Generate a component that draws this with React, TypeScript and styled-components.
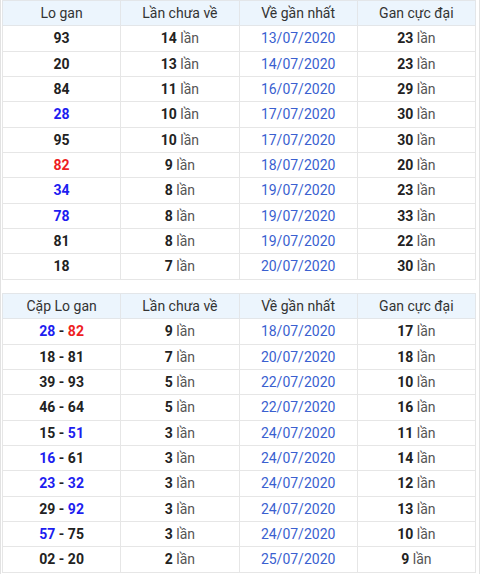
import React from "react";
import styled, { createGlobalStyle } from "styled-components";

const Global = createGlobalStyle`
  html, body { margin: 0; padding: 0; background: #fff; }
  body { font-family: Roboto, "Noto Sans", "Liberation Sans", sans-serif; }
`;

const Page = styled.div`
  width: 480px;
  height: 574px;
  box-sizing: border-box;
  border-left: 1px solid #e2e2e2;
  border-right: 1px solid #e2e2e2;
  padding: 0 3px 0 1px;
  overflow: hidden;
`;

const Table = styled.table`
  width: 100%;
  border-collapse: collapse;
  table-layout: fixed;
  & + & { margin-top: 13.33px; }
`;

const HeadCell = styled.th`
  height: 24.33px;
  padding: 0;
  background: #ecf5fd;
  border: 1px solid #e3e6e9;
  font-weight: 400;
  font-size: 14px;
  color: #333;
  text-align: center;
`;

const Cell = styled.td`
  height: 24.33px;
  padding: 0;
  border: 1px solid #e6e6e6;
  font-size: 14px;
  color: #222;
  text-align: center;
`;

type Tone = "dark" | "blue" | "red";
const toneColor: Record<Tone, string> = {
  dark: "#222",
  blue: "#1d1df0",
  red: "#ee1d23",
};

const Num = styled.span<{ $tone: Tone }>`
  font-weight: 700;
  color: ${(p) => toneColor[p.$tone]};
`;

const Dash = styled.span`
  font-weight: 700;
  color: #222;
`;

const Count = styled.span`
  font-weight: 700;
  color: #222;
`;

const Unit = styled.span`
  color: #555;
`;

const DateText = styled.span`
  color: #3a5fd0;
`;

type N = [string, Tone];
type Row = { nums: N[]; count: number; date: string; max: number };

const b = (v: string): N => [v, "blue"];
const r = (v: string): N => [v, "red"];
const d = (v: string): N => [v, "dark"];

const table1: Row[] = [
  { nums: [d("93")], count: 14, date: "13/07/2020", max: 23 },
  { nums: [d("20")], count: 13, date: "14/07/2020", max: 23 },
  { nums: [d("84")], count: 11, date: "16/07/2020", max: 29 },
  { nums: [b("28")], count: 10, date: "17/07/2020", max: 30 },
  { nums: [d("95")], count: 10, date: "17/07/2020", max: 30 },
  { nums: [r("82")], count: 9, date: "18/07/2020", max: 20 },
  { nums: [b("34")], count: 8, date: "19/07/2020", max: 23 },
  { nums: [b("78")], count: 8, date: "19/07/2020", max: 33 },
  { nums: [d("81")], count: 8, date: "19/07/2020", max: 22 },
  { nums: [d("18")], count: 7, date: "20/07/2020", max: 30 },
];

const table2: Row[] = [
  { nums: [b("28"), r("82")], count: 9, date: "18/07/2020", max: 17 },
  { nums: [d("18"), d("81")], count: 7, date: "20/07/2020", max: 18 },
  { nums: [d("39"), d("93")], count: 5, date: "22/07/2020", max: 10 },
  { nums: [d("46"), d("64")], count: 5, date: "22/07/2020", max: 16 },
  { nums: [d("15"), b("51")], count: 3, date: "24/07/2020", max: 11 },
  { nums: [b("16"), d("61")], count: 3, date: "24/07/2020", max: 14 },
  { nums: [b("23"), b("32")], count: 3, date: "24/07/2020", max: 12 },
  { nums: [d("29"), b("92")], count: 3, date: "24/07/2020", max: 13 },
  { nums: [b("57"), d("75")], count: 3, date: "24/07/2020", max: 10 },
  { nums: [d("02"), d("20")], count: 2, date: "25/07/2020", max: 9 },
];

const Times = ({ n }: { n: number }) => (
  <>
    <Count>{n}</Count> <Unit>lần</Unit>
  </>
);

const GanTable = ({ first, rows }: { first: string; rows: Row[] }) => (
  <Table>
    <thead>
      <tr>
        <HeadCell>{first}</HeadCell>
        <HeadCell>Lần chưa về</HeadCell>
        <HeadCell>Về gần nhất</HeadCell>
        <HeadCell>Gan cực đại</HeadCell>
      </tr>
    </thead>
    <tbody>
      {rows.map((row, i) => (
        <tr key={i}>
          <Cell>
            {row.nums.map(([v, t], j) => (
              <React.Fragment key={j}>
                {j > 0 && <Dash> - </Dash>}
                <Num $tone={t}>{v}</Num>
              </React.Fragment>
            ))}
          </Cell>
          <Cell>
            <Times n={row.count} />
          </Cell>
          <Cell>
            <DateText>{row.date}</DateText>
          </Cell>
          <Cell>
            <Times n={row.max} />
          </Cell>
        </tr>
      ))}
    </tbody>
  </Table>
);

export default function App() {
  return (
    <>
      <Global />
      <Page>
        <GanTable first="Lo gan" rows={table1} />
        <GanTable first="Cặp Lo gan" rows={table2} />
      </Page>
    </>
  );
}
